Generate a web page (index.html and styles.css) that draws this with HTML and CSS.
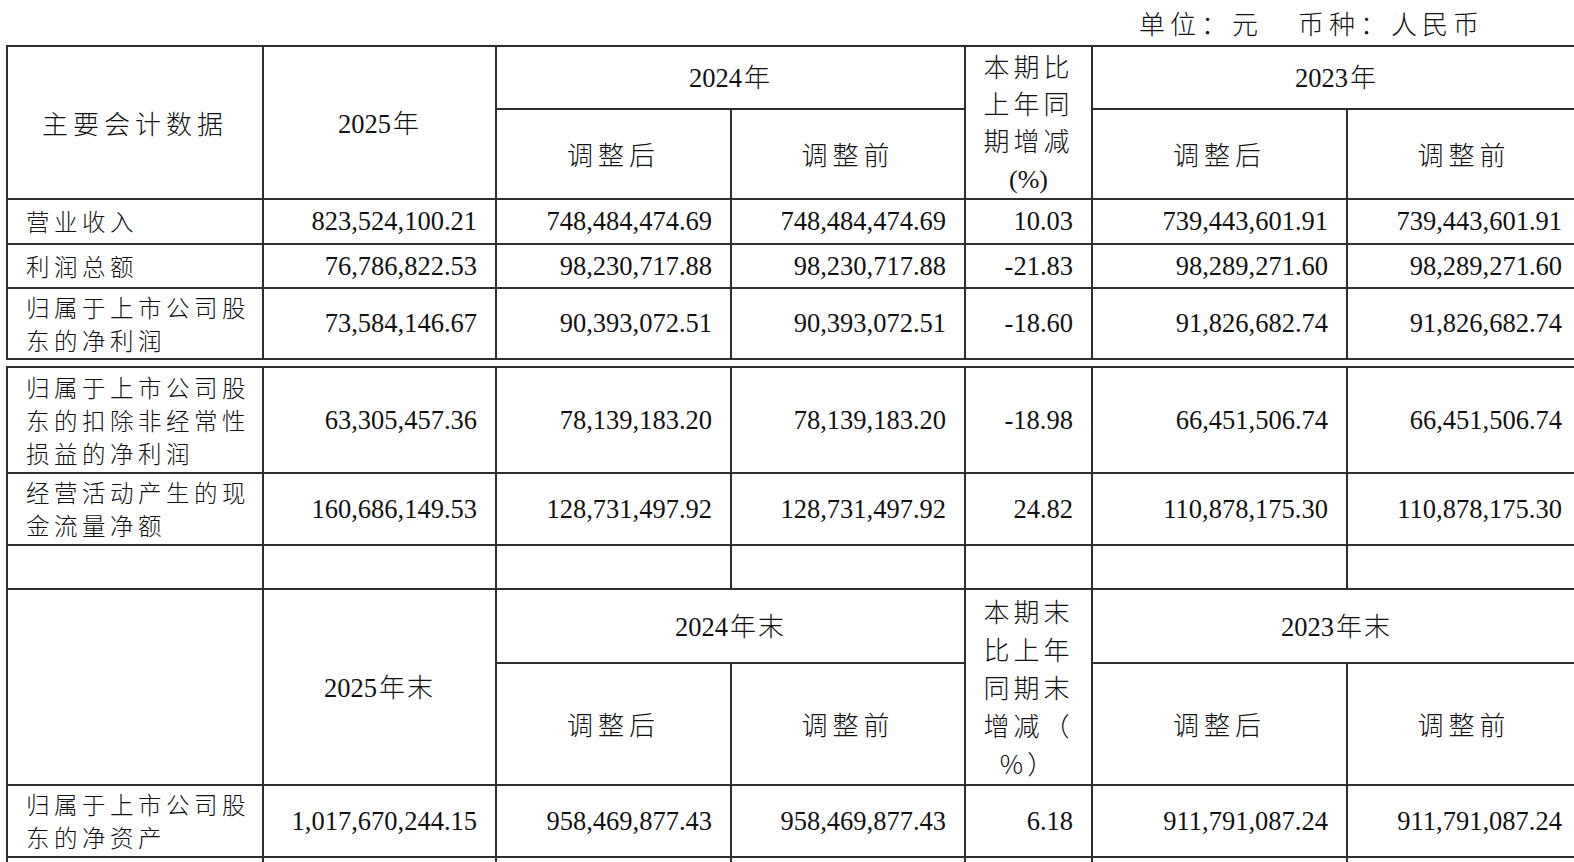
FILE: index.html
```html
<!DOCTYPE html>
<html lang="zh-CN">
<head>
<meta charset="utf-8">
<title>主要会计数据</title>
<link rel="stylesheet" href="styles.css">
</head>
<body>
<div class="unit"><span class="unit-a">单位：元</span><span class="unit-b">币种：人民币</span></div>

<table class="fin">
  <colgroup>
    <col class="w-label"><col class="w-cur"><col class="w-a"><col class="w-b"><col class="w-chg"><col class="w-c"><col class="w-d">
  </colgroup>
  <tr class="rh1">
    <th rowspan="2" class="hcn">主要会计数据</th>
    <th rowspan="2" class="hyr">2025<span class="cj">年</span></th>
    <th colspan="2" class="hyr">2024<span class="cj">年</span></th>
    <th rowspan="2" class="hcn chg chg4">本期比<br>上年同<br>期增减<br><span class="num">(%)</span></th>
    <th colspan="2" class="hyr">2023<span class="cj">年</span></th>
  </tr>
  <tr class="rh2">
    <th class="hcn">调整后</th><th class="hcn">调整前</th><th class="hcn">调整后</th><th class="hcn">调整前</th>
  </tr>
  <tr class="r45">
    <td class="lbl">营业收入</td><td>823,524,100.21</td><td>748,484,474.69</td><td>748,484,474.69</td><td>10.03</td><td>739,443,601.91</td><td>739,443,601.91</td>
  </tr>
  <tr class="r44">
    <td class="lbl">利润总额</td><td>76,786,822.53</td><td>98,230,717.88</td><td>98,230,717.88</td><td>-21.83</td><td>98,289,271.60</td><td>98,289,271.60</td>
  </tr>
  <tr class="r71">
    <td class="lbl">归属于上市公司股<br>东的净利润</td><td>73,584,146.67</td><td>90,393,072.51</td><td>90,393,072.51</td><td>-18.60</td><td>91,826,682.74</td><td>91,826,682.74</td>
  </tr>
</table>

<table class="fin second">
  <colgroup>
    <col class="w-label"><col class="w-cur"><col class="w-a"><col class="w-b"><col class="w-chg"><col class="w-c"><col class="w-d">
  </colgroup>
  <tr class="r106">
    <td class="lbl">归属于上市公司股<br>东的扣除非经常性<br>损益的净利润</td><td>63,305,457.36</td><td>78,139,183.20</td><td>78,139,183.20</td><td>-18.98</td><td>66,451,506.74</td><td>66,451,506.74</td>
  </tr>
  <tr class="r72">
    <td class="lbl">经营活动产生的现<br>金流量净额</td><td>160,686,149.53</td><td>128,731,497.92</td><td>128,731,497.92</td><td>24.82</td><td>110,878,175.30</td><td>110,878,175.30</td>
  </tr>
  <tr class="r44">
    <td></td><td></td><td></td><td></td><td></td><td></td><td></td>
  </tr>
  <tr class="rh3">
    <th rowspan="2"></th>
    <th rowspan="2" class="hyr">2025<span class="cj">年末</span></th>
    <th colspan="2" class="hyr">2024<span class="cj">年末</span></th>
    <th rowspan="2" class="hcn chg">本期末<br>比上年<br>同期末<br>增减（<br>%）</th>
    <th colspan="2" class="hyr">2023<span class="cj">年末</span></th>
  </tr>
  <tr class="rh4">
    <th class="hcn">调整后</th><th class="hcn">调整前</th><th class="hcn">调整后</th><th class="hcn">调整前</th>
  </tr>
  <tr class="r72">
    <td class="lbl">归属于上市公司股<br>东的净资产</td><td>1,017,670,244.15</td><td>958,469,877.43</td><td>958,469,877.43</td><td>6.18</td><td>911,791,087.24</td><td>911,791,087.24</td>
  </tr>
  <tr class="r44">
    <td></td><td></td><td></td><td></td><td></td><td></td><td></td>
  </tr>
</table>
</body>
</html>
```

FILE: styles.css
```css
html {
  overflow: hidden;
  background: #ffffff;
}

body {
  margin: 0;
  color: #111111;
  font-family: "Liberation Serif", "Noto Sans CJK SC", serif;
  font-size: 26.5px;
  font-weight: 400;
}

.unit {
  display: flex;
  justify-content: flex-end;
  align-items: center;
  height: 45px;
  padding-right: 90px;
  font-family: "Noto Sans CJK SC", sans-serif;
  font-size: 26px;
  letter-spacing: 5px;
  font-weight: 300;
  line-height: 1;
}

.unit-b {
  margin-left: 35px;
}

.fin {
  margin-left: 6px;
  width: 1574px;
  table-layout: fixed;
  border-collapse: collapse;
}

.second {
  margin-top: 6px;
}

.w-label { width: 256px; }
.w-cur { width: 233px; }
.w-a { width: 235px; }
.w-b { width: 234px; }
.w-chg { width: 127px; }
.w-c { width: 255px; }
.w-d { width: 234px; }

.fin th,
.fin td {
  border: 2px solid #2e2e2e;
  padding: 0 18px;
  vertical-align: middle;
  white-space: nowrap;
  font-weight: 400;
  line-height: 33px;
}

.fin td {
  text-align: right;
}

.fin th {
  text-align: center;
}

.fin .lbl {
  text-align: left;
  font-family: "Noto Sans CJK SC", sans-serif;
  font-size: 23.5px;
  letter-spacing: 4.5px;
  font-weight: 300;
}

.fin .hcn {
  font-family: "Noto Sans CJK SC", sans-serif;
  font-size: 26px;
  letter-spacing: 5px;
  font-weight: 300;
  line-height: 38px;
}

.fin .hyr {
  font-family: "Liberation Serif", "Noto Sans CJK SC", serif;
  font-weight: 400;
  line-height: 38px;
}

.cj {
  font-family: "Noto Sans CJK SC", sans-serif;
  font-size: 26px;
  font-weight: 300;
  letter-spacing: 2px;
  margin-left: 2px;
}

.fin .chg {
  padding: 0;
  letter-spacing: 4px;
}

.fin .chg4 {
  line-height: 37px;
}

.num {
  font-family: "Liberation Serif", serif;
  font-weight: 400;
  letter-spacing: 0;
}

.rh1 { height: 62px; }
.rh2 { height: 89px; }
.rh3 { height: 74px; }
.rh4 { height: 122px; }
.r44 { height: 44px; }
.r45 { height: 45px; }
.r71 { height: 71px; }
.r72 { height: 72px; }
.r106 { height: 106px; }
```
